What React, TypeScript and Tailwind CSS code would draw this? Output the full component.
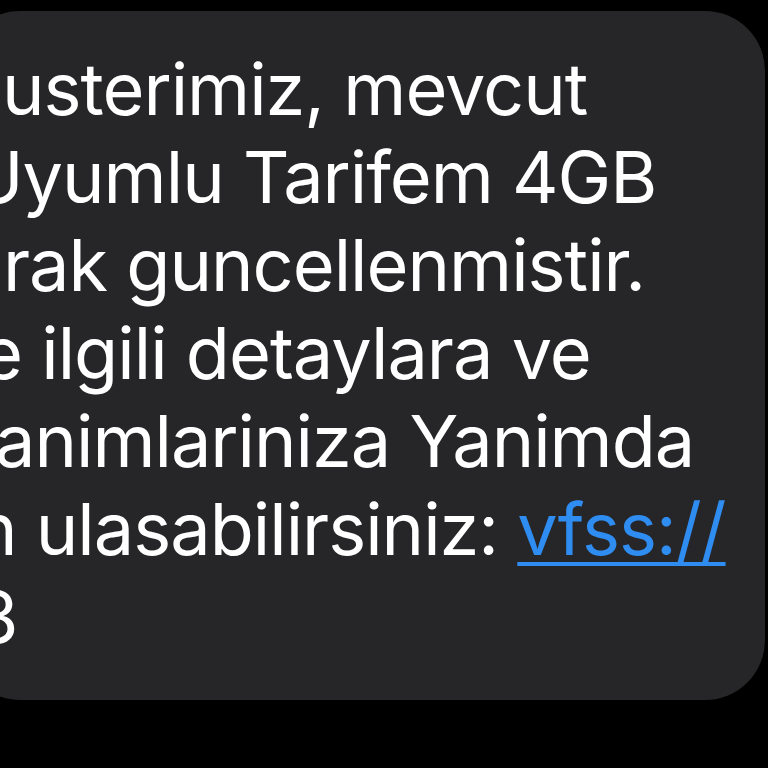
import type { ReactNode } from 'react';

type Line = { text: ReactNode; offset: string };

const lines: Line[] = [
  { text: 'usterimiz, mevcut', offset: 'ml-[2px]' },
  { text: 'Uyumlu Tarifem 4GB', offset: '-ml-[30px]' },
  { text: 'rak guncellenmistir.', offset: 'ml-[3px]' },
  { text: 'e ilgili detaylara ve', offset: '-ml-[19px]' },
  { text: 'animlariniza Yanimda', offset: '-ml-[5px]' },
  {
    text: (
      <>
        n ulasabilirsiniz:{' '}
        <span className="text-[#2f8cf0] underline decoration-[4px] underline-offset-[7px]">vfss://</span>
      </>
    ),
    offset: '-ml-[25px]',
  },
  { text: '3', offset: '-ml-[26px]' },
];

export default function App() {
  return (
    <div className="h-[768px] w-[768px] overflow-hidden bg-black">
      <div className="-ml-[40px] mt-[11px] h-[689px] w-[805px] rounded-[60px] bg-[#262628] pl-[40px] pt-[34px]">
        <div
          className="flex flex-col text-[72px] leading-[88px] text-white tracking-[-1px]"
          style={{ fontFamily: 'Inter, "Noto Sans", sans-serif' }}
        >
          {lines.map((line, i) => (
            <div key={i} className={`whitespace-nowrap ${line.offset}`}>
              {line.text}
            </div>
          ))}
        </div>
      </div>
    </div>
  );
}
